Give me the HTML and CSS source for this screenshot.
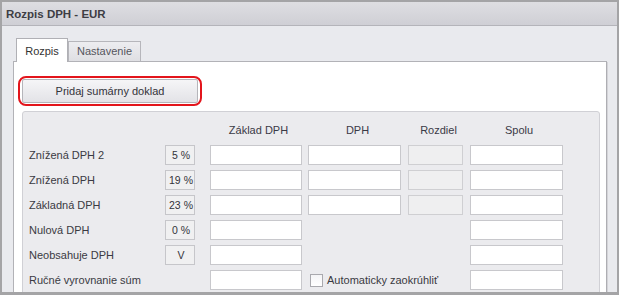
FILE: index.html
```html
<!DOCTYPE html>
<html>
<head>
    <title>Rozpis DPH - EUR</title>
    <link rel="stylesheet" href="styles.css">
</head>
<body>
    <div class="window">
        <div class="titlebar">Rozpis DPH - EUR</div>

        <div class="content">
            <div class="tabs">
                <div class="tab active">Rozpis</div>
                <div class="tab">Nastavenie</div>
            </div>

            <div class="panel">
                <div class="highlight">
                    <button class="btn">Pridaj sumárny doklad</button>
                </div>

                <div class="group">
                    <div class="grid">
                        <!-- header -->
                        <div></div>
                        <div></div>
                        <div class="head">Základ DPH</div>
                        <div class="head">DPH</div>
                        <div class="head">Rozdiel</div>
                        <div class="head">Spolu</div>

                        <div class="label">Znížená DPH 2</div>
                        <div class="rate">5 %</div>
                        <div class="field w92"></div>
                        <div class="field w93"></div>
                        <div class="field readonly w55"></div>
                        <div class="field w93"></div>

                        <div class="label">Znížená DPH</div>
                        <div class="rate">19 %</div>
                        <div class="field w92"></div>
                        <div class="field w93"></div>
                        <div class="field readonly w55"></div>
                        <div class="field w93"></div>

                        <div class="label">Základná DPH</div>
                        <div class="rate">23 %</div>
                        <div class="field w92"></div>
                        <div class="field w93"></div>
                        <div class="field readonly w55"></div>
                        <div class="field w93"></div>

                        <div class="label">Nulová DPH</div>
                        <div class="rate">0 %</div>
                        <div class="field w92"></div>
                        <div></div>
                        <div></div>
                        <div class="field w93"></div>

                        <div class="label">Neobsahuje DPH</div>
                        <div class="rate">V</div>
                        <div class="field w92"></div>
                        <div></div>
                        <div></div>
                        <div class="field w93"></div>

                        <div class="label">Ručné vyrovnanie súm</div>
                        <div></div>
                        <div class="field w92"></div>
                        <label class="check">
                            <span class="box"></span>
                            <span>Automaticky zaokrúhliť</span>
                        </label>
                        <div></div>
                        <div class="field w93"></div>
                    </div>
                </div>
            </div>
        </div>
    </div>
</body>
</html>
```

FILE: styles.css
```css
body {
    margin: 0;
    padding: 0;
    font-family: "Liberation Sans", Arial, sans-serif;
    font-size: 11px;
    color: #3a3a42;
}

.window {
    width: 619px;
    height: 295px;
    box-sizing: border-box;
    border: 2px solid #a4a4a6;
    border-bottom-width: 3px;
    background-color: #e9eaee;
    overflow: hidden;
}

.titlebar {
    height: 23px;
    line-height: 24px;
    padding-left: 4px;
    font-size: 11.5px;
    font-weight: bold;
    color: #3e3e44;
    background: linear-gradient(#dedee2, #cfcfd5);
    border-bottom: 1px solid #b4b4ba;
}

.content {
    padding: 12px 10px 0 11px;
}

/* tab strip, its bottom border is the top edge of the panel */
.tabs {
    display: flex;
    align-items: flex-end;
    height: 23px;
    padding-left: 3px;
    border-bottom: 1px solid #b2b2b7;
}

.tab {
    box-sizing: border-box;
    border: 1px solid #b6b6bb;
    border-bottom: none;
    text-align: center;
}

.tab.active {
    width: 52px;
    height: 24px;
    margin-bottom: -1px;
    padding-top: 3px;
    line-height: 19px;
    background-color: #fff;
    color: #333;
    border-color: #b0b0b5;
}

.tab:not(.active) {
    width: 73px;
    height: 20px;
    line-height: 19px;
    color: #55555d;
    background: linear-gradient(#ededf0, #dfdfe3);
}

.panel {
    background-color: #fff;
    border-left: 1px solid #b2b2b7;
    border-right: 1px solid #aeaeb3;
    box-shadow: 1px 0 0 #d4d4d8;
    padding: 14px 6px 0 4px;
    height: 260px;
}

.highlight {
    display: flex;
    width: fit-content;
    border: 2px solid #e3151c;
    border-radius: 8px;
    padding: 1px 2px;
}

.btn {
    width: 176px;
    height: 24px;
    border: 1px solid #b5b5ba;
    border-radius: 2px;
    background: linear-gradient(#f5f5f7, #e3e3e7);
    font-family: "Liberation Sans", Arial, sans-serif;
    font-size: 11px;
    color: #33333a;
    padding: 0;
}

.group {
    margin: 5px 0 0 4px;
    border: 1px solid #d0d0d5;
    border-radius: 3px;
    background-color: #ebebee;
    padding: 11px 0 0 6px;
    height: 200px;
}

.grid {
    display: grid;
    grid-template-columns: 130px 39px 92px 94px 56px 93px;
    grid-template-rows: 17px repeat(6, 20px);
    column-gap: 6px;
    row-gap: 5px;
}

.head {
    line-height: 14px;
    text-align: center;
    padding-left: 5px;
    color: #3a3a46;
    white-space: nowrap;
}

.label {
    line-height: 20px;
    white-space: nowrap;
}

.rate {
    width: 30px;
    box-sizing: border-box;
    border: 1px solid #c6c6ca;
    background-color: #f0f0f1;
    line-height: 18px;
    text-align: center;
    padding-left: 2px;
    color: #33333a;
    white-space: nowrap;
    font-size: 10.5px;
}

.field {
    box-sizing: border-box;
    border: 1px solid #c8c8cc;
    background-color: #fff;
}

.field.readonly {
    background-color: #efeff0;
    border-color: #cfcfd2;
}

.w92 { width: 92px; }
.w93 { width: 93px; }
.w55 { width: 55px; }

.check {
    display: flex;
    align-items: center;
    gap: 4px;
    padding-left: 2px;
    white-space: nowrap;
}

.check .box {
    flex-shrink: 0;
    width: 13px;
    height: 13px;
    box-sizing: border-box;
    border: 1px solid #a9a9ae;
    background: linear-gradient(#f4f4f6, #fff);
}
```
